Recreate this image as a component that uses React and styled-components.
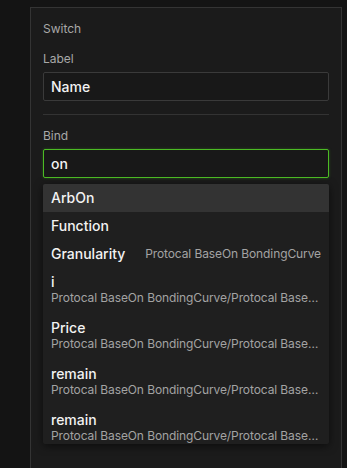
import React from "react";
import styled, { createGlobalStyle } from "styled-components";

const Global = createGlobalStyle`
  html, body { margin: 0; padding: 0; background: #141414; overflow: hidden; }
  body { font-family: Inter, "Noto Sans", "Liberation Sans", sans-serif; -webkit-font-smoothing: antialiased; }
  * { box-sizing: border-box; }
`;

const Page = styled.div`
  padding: 7px 5px 0 30px;
  height: 468px;
`;

const Panel = styled.div`
  width: 312px;
  height: 480px;
  background: #1b1b1b;
  border: 1px solid #343434;
  border-bottom: none;
  padding: 13px 12px 0 12px;
  display: flex;
  flex-direction: column;
`;

const Title = styled.div`
  font-size: 12px;
  line-height: 16px;
  color: #a8a8a8;
  margin-bottom: 14px;
`;

const FieldLabel = styled.div`
  font-size: 12px;
  line-height: 16px;
  color: #a8a8a8;
  margin-bottom: ${(p) => p.$gap}px;
`;

const Input = styled.div`
  height: ${(p) => p.$h}px;
  border: 1px solid ${(p) => (p.$focus ? "#4cbb24" : "#3a3a3a")};
  box-shadow: ${(p) => (p.$focus ? "0 0 3px rgba(76,187,36,0.35)" : "none")};
  border-radius: 2px;
  background: #181818;
  padding: 0 7px;
  display: flex;
  align-items: center;
  font-size: 14px;
  font-weight: 450;
  color: #f2f2f2;
`;

const Divider = styled.div`
  height: 1px;
  background: #333;
  margin: 13px 0 13px;
`;

const BindField = styled.div`
  position: relative;
`;

const Dropdown = styled.div`
  position: absolute;
  left: 0;
  right: 0;
  top: 35px;
  height: 260px;
  overflow: hidden;
  background: #1f1f1f;
  border-radius: 2px;
  box-shadow: 0 2px 8px rgba(0, 0, 0, 0.55);
`;

const Row = styled.div`
  height: ${(p) => (p.$two ? 46 : 28)}px;
  padding: ${(p) => (p.$two ? "5px 8px 9px" : "0 8px")};
  background: ${(p) => (p.$active ? "#333333" : "transparent")};
  display: flex;
  flex-direction: ${(p) => (p.$two ? "column" : "row")};
  align-items: ${(p) => (p.$two ? "stretch" : "center")};
  justify-content: ${(p) => (p.$two ? "flex-start" : "space-between")};
`;

const Name = styled.span`
  font-size: 14px;
  line-height: ${(p) => (p.$two ? 18 : 20)}px;
  font-weight: 450;
  color: #f2f2f2;
`;

const Sub = styled.span`
  font-size: 12px;
  line-height: 14px;
  letter-spacing: -0.1px;
  color: #a3a3a3;
  white-space: nowrap;
  overflow: hidden;
  text-overflow: ellipsis;
`;

const longSub = "Protocal BaseOn BondingCurve/Protocal BaseOn BondingCurve";

const items = [
  { name: "ArbOn", active: true },
  { name: "Function" },
  { name: "Granularity", inline: "Protocal BaseOn BondingCurve" },
  { name: "i", sub: longSub },
  { name: "Price", sub: longSub },
  { name: "remain", sub: longSub },
  { name: "remain", sub: longSub },
];

export default function App() {
  return (
    <>
      <Global />
      <Page>
        <Panel>
          <Title>Switch</Title>
          <FieldLabel $gap={5}>Label</FieldLabel>
          <Input $h={29}>Name</Input>
          <Divider />
          <FieldLabel $gap={5}>Bind</FieldLabel>
          <BindField>
            <Input $h={29} $focus>on</Input>
            <Dropdown>
              {items.map((it, i) =>
                it.sub ? (
                  <Row key={i} $two>
                    <Name $two>{it.name}</Name>
                    <Sub>{it.sub}</Sub>
                  </Row>
                ) : (
                  <Row key={i} $active={it.active}>
                    <Name>{it.name}</Name>
                    {it.inline && <Sub>{it.inline}</Sub>}
                  </Row>
                )
              )}
            </Dropdown>
          </BindField>
        </Panel>
      </Page>
    </>
  );
}
